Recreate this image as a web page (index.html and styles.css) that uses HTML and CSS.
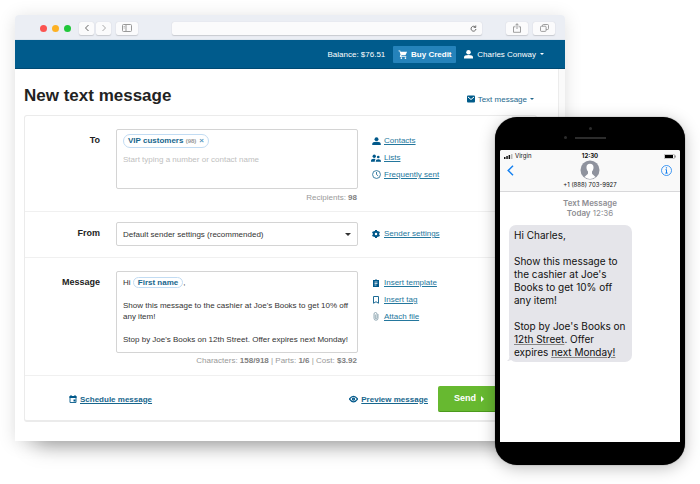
FILE: index.html
```html
<!DOCTYPE html>
<html lang="en">
<head>
    <meta charset="UTF-8">
    <meta name="viewport" content="width=device-width, initial-scale=1.0">
    <title>New text message</title>
    <link rel="stylesheet" href="styles.css">
</head>
<body>
    <div class="stage">
        <div class="browser">
            <div class="toolbar">
                <div class="dots">
                    <span class="dot red"></span>
                    <span class="dot yellow"></span>
                    <span class="dot green"></span>
                </div>
                <div class="history">
                    <button class="tool small" aria-label="Back"><svg width="8" height="8" viewBox="0 0 8 8" fill="none" stroke="#666"><path d="M5.5 1 2.5 4l3 3"/></svg></button>
                    <button class="tool small" aria-label="Forward"><svg width="8" height="8" viewBox="0 0 8 8" fill="none" stroke="#aaa"><path d="M2.5 1l3 3-3 3"/></svg></button>
                </div>
                <button class="tool" aria-label="Sidebar"><svg width="10" height="8" viewBox="0 0 10 8" fill="none" stroke="#999"><rect x=".5" y=".5" width="9" height="7" rx="1"/><path d="M4 1v6"/><path d="M1.5 2.5H3M1.5 4H3" stroke-width=".6"/></svg></button>
                <div class="address">
                    <input type="text" aria-label="Address">
                    <svg width="7" height="7" viewBox="0 0 8 8" fill="none" stroke="#555"><path d="M6.3 2.6A2.8 2.8 0 1 0 6.8 4.6"/><path d="M4.2 2.7h2.4V.5" stroke-width=".9"/></svg>
                </div>
                <div class="actions">
                    <button class="tool" aria-label="Share"><svg width="8" height="10" viewBox="0 0 8 10" fill="none" stroke="#888" stroke-width=".8"><path d="M2.5 3.8h-2v5.5h7V3.8h-2M4 6V.8M2.3 2.4 4 .7l1.7 1.7"/></svg></button>
                    <button class="tool" aria-label="Tabs"><svg width="9" height="8" viewBox="0 0 9 8" fill="none" stroke="#888" stroke-width=".8"><rect x=".5" y="2.2" width="5.6" height="5.2" rx="1"/><path d="M2.5 2.2V1.5q0-1 1-1h4q1 0 1 1v3q0 1-1 1H6.2"/></svg></button>
                </div>
            </div>

            <header class="app-bar">
                <span>Balance: $76.51</span>
                <button class="buy"><svg width="10" height="9" viewBox="0 0 24 22" fill="#fff"><path d="M1 1h4l1 3h16l-4 9H8.500l-1 2H20v2H5.500q-2-1-1-3l1.500-2.500L3.500 3H1z"/><circle cx="8" cy="20" r="2"/><circle cx="18" cy="20" r="2"/></svg>Buy Credit</button>
                <button class="user"><svg width="9" height="9" viewBox="0 0 16 16" fill="#fff"><circle cx="8" cy="4" r="4"/><path d="M0 15v-2q0-4 8-4t8 4v2z"/></svg>Charles Conway<i class="caret"></i></button>
            </header>

            <div class="page">
                <main class="content">
                    <div class="title-row">
                        <h1>New text message</h1>
                        <button class="type"><svg width="8" height="8" viewBox="0 0 16 16"><rect y="1" width="16" height="14" rx="2" fill="#005b8a"/><path d="M2 4l6 5 6-5" fill="none" stroke="#fff" stroke-width="2"/></svg>Text message<i class="caret"></i></button>
                    </div>

                    <form class="card">
                        <div class="row">
                            <label class="name" for="to">To</label>
                            <div class="field">
                                <div class="box recipients">
                                    <span class="chip">VIP customers <small>(98)</small><button type="button" class="remove" aria-label="Remove VIP customers">×</button></span>
                                    <input type="text" id="to" placeholder="Start typing a number or contact name">
                                </div>
                                <p class="hint">Recipients: <b>98</b></p>
                            </div>
                            <ul class="links">
                                <li><svg width="9" height="8" viewBox="0 0 16 15" fill="#00588a"><circle cx="8" cy="4" r="3.700"/><path d="M0 15v-2q0-4 8-4t8 4v2z"/></svg><a href="#">Contacts</a></li>
                                <li><svg width="10" height="8" viewBox="0 0 20 15" fill="#00588a"><circle cx="6.500" cy="4" r="3.300"/><path d="M0 15v-2q0-4 6-4l3 .5q-1.500 2-1.500 5.500z"/><circle cx="14.500" cy="5.500" r="2.700"/><path d="M9.500 15v-1.500q0-3.500 5.200-3.500t5.300 3.500V15z"/></svg><a href="#">Lists</a></li>
                                <li><svg width="9" height="9" viewBox="0 0 16 16" fill="none" stroke="#1f6c96" stroke-width="1.500"><circle cx="8" cy="8" r="7"/><path d="M8 3.500V8l3 2.500"/></svg><a href="#">Frequently sent</a></li>
                            </ul>
                        </div>

                        <div class="row from">
                            <label class="name" for="from">From</label>
                            <div class="field select">
                                <select class="box" id="from">
                                    <option>Default sender settings (recommended)</option>
                                </select>
                                <i class="caret"></i>
                            </div>
                            <ul class="links">
                                <li><svg width="8" height="8" viewBox="0 0 16 16"><circle cx="8" cy="8" r="4.500" fill="none" stroke="#00588a" stroke-width="4"/><path d="M8 0v3M8 13v3M1 4l2.700 1.500M12.300 10.500 15 12M1 12l2.700-1.500M12.300 5.500 15 4" stroke="#00588a" stroke-width="4"/></svg><a href="#">Sender settings</a></li>
                            </ul>
                        </div>

                        <div class="row message">
                            <span class="name" id="message-label">Message</span>
                            <div class="field">
                                <div class="box editor" contenteditable="true" role="textbox" aria-multiline="true" aria-labelledby="message-label" spellcheck="false">
                                    <p>Hi <span class="chip">First name</span>,</p>
                                    <p>Show this message to the cashier at Joe's Books to get 10% off any item!</p>
                                    <p>Stop by Joe's Books on 12th Street. Offer expires next Monday!</p>
                                </div>
                                <p class="hint">Characters: <b>158/918</b> | Parts: <b>1/6</b> | Cost: <b>$3.92</b></p>
                            </div>
                            <ul class="links">
                                <li><svg width="8" height="8" viewBox="0 0 16 16"><path d="M2 2h4q2-3 4 0h4v14H2z" fill="#00588a"/><path d="M5 6h6M5 9h6M5 12h4" stroke="#fff" stroke-width="1.500"/></svg><a href="#">Insert template</a></li>
                                <li><svg width="8" height="8" viewBox="0 0 16 16"><path d="M3 1h10v13.500l-5-3-5 3z" fill="none" stroke="#1f6c96" stroke-width="2"/></svg><a href="#">Insert tag</a></li>
                                <li><svg width="8" height="9" viewBox="0 0 16 18"><path d="M12 4v8.500a4 4 0 0 1-8 0V4a3 3 0 0 1 6 0v8a1.700 1.700 0 0 1-3.400 0V5" fill="none" stroke="#7793a0" stroke-width="1.500"/></svg><a href="#">Attach file</a></li>
                            </ul>
                        </div>

                        <div class="footer">
                            <div class="schedule"><svg width="8" height="8" viewBox="0 0 16 16"><path d="M2 3h12v12H2z" fill="none" stroke="#1f6c96" stroke-width="2"/><path d="M1 2h14v4H1zM3 0h2v3H3zM11 0h2v3h-2zM9 9h4v4H9z" fill="#00588a"/></svg><a href="#">Schedule message</a></div>
                            <div class="preview"><svg width="9" height="8" viewBox="0 0 18 14" fill="none" stroke="#00588a" stroke-width="2.500"><path d="M1 7q8-11 16 0-8 11-16 0z"/><circle cx="9" cy="7" r="2"/></svg><a href="#">Preview message</a></div>
                            <button type="button" class="send">Send<i></i></button>
                        </div>
                    </form>
                </main>
            </div>
        </div>

        <div class="phone">
            <div class="phone-top">
                <span class="sensor"></span>
                <div class="speaker-row"><span class="camera"></span><span class="speaker"></span></div>
            </div>
            <div class="screen">
                <div class="phone-head">
                    <div class="status">
                        <span class="carrier"><svg width="9" height="5" viewBox="0 0 9 5"><path d="M0 3h1.500v2H0zM2.300 2h1.500v3H2.300zM4.600 1h1.500v4H4.600z" fill="#111"/><path d="M7 0h1.500v5H7z" fill="#bbb"/></svg>Virgin</span>
                        <b>12:30</b>
                        <svg class="battery" width="12" height="5" viewBox="0 0 12 5"><rect x=".3" y=".3" width="10.200" height="4.400" rx="1" fill="none" stroke="#777" stroke-width=".5"/><path d="M1 1h8v3H1z" fill="#000"/><path d="M11.200 1.500v2" stroke="#777"/></svg>
                    </div>
                    <div class="contact">
                        <button aria-label="Back"><svg width="7" height="11" viewBox="0 0 7 11" fill="none" stroke="#1480f0" stroke-width="1.500"><path d="M6 .7 1.200 5.500 6 10.300"/></svg></button>
                        <svg width="20" height="20" viewBox="0 0 20 20"><circle cx="10" cy="10" r="9.500" fill="#8f939e"/><path d="M10 3.800c2.500 0 3.700 1.600 3.500 3.900-.1 1.600-.6 2.800-1.500 3.700v2c.4 1.300 2.200 1.800 3.500 3.500a9.200 9.200 0 0 1-11 0c1.300-1.700 3.100-2.200 3.500-3.500v-2c-.9-.9-1.400-2.100-1.500-3.700-.2-2.300 1-3.900 3.500-3.900z" fill="#fff"/></svg>
                        <button aria-label="Details"><svg width="11" height="11" viewBox="0 0 11 11" fill="none" stroke="#1480f0"><circle cx="5.500" cy="5.500" r="5" stroke-width=".8"/><path d="M5.500 4.600v3.500M4.500 4.700h1M4.300 8.100h2.400"/><circle cx="5.400" cy="2.900" r=".3"/></svg></button>
                    </div>
                    <p class="number">+1 (888) 703-9927</p>
                </div>
                <p class="stamp"><b>Text Message</b><br><b>Today</b> 12:36</p>
                <div class="bubble">
                    <p>Hi Charles,</p>
                    <p>Show this message to the cashier at Joe's Books to get 10% off any item!</p>
                    <p>Stop by Joe's Books on <u>12th Street</u>. Offer expires <u>next Monday!</u></p>
                    <svg class="tail" width="6" height="5" viewBox="0 0 6 5"><path d="M2 0v2L0 4q3 0 6-2z" fill="#e5e5ea"/></svg>
                </div>
            </div>
        </div>
    </div>
</body>
</html>
```
FILE: styles.css
```css
* {
    box-sizing: border-box;
}

body {
    margin: 0;
    padding: 15px 15px 42px;
    min-height: 100vh;
    background: #fff;
    color: #333;
    font-family: "Liberation Sans", Arial, sans-serif;
    font-size: 8px;
    line-height: 11px;
}

p, h1, ul {
    margin: 0;
    padding: 0;
}

button, input, select {
    font: inherit;
    color: inherit;
    border: 0;
    padding: 0;
    margin: 0;
    background: none;
}

svg {
    flex: none;
}

a {
    color: #24779d;
}

.stage {
    position: relative;
    padding-right: 120px;
}

/* Browser window */
.browser {
    position: relative;
    background: #fff;
    border-radius: 4px 4px 0 0;
    box-shadow: 0 2px 18px rgba(0, 0, 0, 0.13), 0 24px 20px -20px rgba(0, 0, 0, 0.35);
}

.toolbar {
    display: flex;
    align-items: center;
    height: 25px;
    padding: 2px 10px 0 25px;
    background: #ebeef4;
    border-radius: 4px 4px 0 0;
    border-bottom: 1px solid #dde4ec;
}

.dots {
    display: flex;
    gap: 5px;
    margin-right: 8px;
}

.dot {
    width: 7px;
    height: 7px;
    border-radius: 50%;
}

.red {
    background: #fb5350;
}

.yellow {
    background: #fdb124;
}

.green {
    background: #20c73a;
}

.history {
    display: flex;
    gap: 2px;
    margin-right: 5px;
}

.tool {
    display: flex;
    align-items: center;
    justify-content: center;
    width: 22px;
    height: 13px;
    background: #fbfbfc;
    border-radius: 2px;
    box-shadow: 0 1px 1px #c8cbd0, 0 0 1px #c8cbd0;
}

.tool.small {
    width: 15px;
}

.address {
    display: flex;
    align-items: center;
    flex: 1;
    height: 13px;
    margin: 0 24px 0 34px;
    padding-right: 5px;
    background: #fbfbfc;
    border-radius: 2px;
    box-shadow: 0 1px 1px #c8cbd0, 0 0 1px #c8cbd0;
}

.address input {
    flex: 1;
    min-width: 0;
    height: 11px;
}

.actions {
    display: flex;
    gap: 5px;
}

.app-bar {
    display: flex;
    align-items: center;
    justify-content: flex-end;
    gap: 8px;
    height: 29px;
    padding-right: 21px;
    background: #005b8c;
    border-bottom: 1px solid #004a73;
    color: #fff;
}

.buy {
    display: flex;
    align-items: center;
    justify-content: center;
    gap: 3px;
    width: 63px;
    height: 17px;
    background: #2583bb;
    border-radius: 1px;
    font-weight: bold;
}

.user, .type {
    display: flex;
    align-items: center;
    gap: 4px;
}

.caret {
    border: 2px solid transparent;
    border-top-color: currentColor;
    border-bottom: 0;
}

/* Compose page */
.page {
    padding-right: 6px;
    background: #fafafa;
}

.content {
    padding: 0 21px 19px 9px;
    background: #fff;
    border-right: 1px solid #ececec;
}

.title-row {
    display: flex;
    align-items: center;
    justify-content: space-between;
    height: 46px;
    padding: 7px 3px 0 0;
}

h1 {
    color: #222;
    font-size: 17px;
    line-height: 20px;
}

.type {
    gap: 3px;
    padding-top: 7px;
    color: #24698e;
}

.card {
    border: 1px solid #ebebeb;
    border-width: 1px 1px 2px;
    border-radius: 3px;
}

.row {
    display: grid;
    grid-template-columns: 75px minmax(0, 242px) 1fr;
    column-gap: 16px;
    padding: 13px 0 8px;
    border-bottom: 1px solid #f0f0f0;
}

.name {
    padding-top: 6px;
    color: #222;
    font-size: 9px;
    font-weight: bold;
    text-align: right;
}

.box {
    width: 100%;
    border: 1px solid #d4d4d4;
    border-radius: 2px;
    background: #fff;
}

.recipients {
    height: 60px;
    padding: 4px 6px;
}

.recipients input {
    display: block;
    width: 100%;
    height: 11px;
    margin-top: 6px;
}

.recipients input::placeholder {
    color: #c0c0c0;
}

.chip {
    display: inline-block;
    padding: 0 4px;
    border: 1px solid #c2dcf3;
    border-radius: 7px;
    color: #17668d;
    font-weight: bold;
}

.recipients .chip {
    display: table;
    height: 14px;
    line-height: 12px;
}

.chip small {
    color: #999;
    font-size: 6px;
}

.remove {
    margin-left: 3px;
    color: #5b97bd;
}

.hint {
    padding: 3px 1px 0 0;
    color: #999;
    text-align: right;
}

.hint b {
    color: #808080;
}

.links {
    display: flex;
    flex-direction: column;
    gap: 6px;
    padding-top: 6px;
    margin-left: -3px;
    list-style: none;
}

.links li {
    display: grid;
    grid-template-columns: 10px auto;
    justify-content: start;
    justify-items: center;
    align-items: center;
    column-gap: 3px;
}

.from {
    padding: 10px 0 11px;
}

.select {
    display: grid;
    align-items: center;
}

.select > * {
    grid-area: 1 / 1;
}

.select select {
    height: 24px;
    padding: 0 6px;
    appearance: none;
}

.select .caret {
    justify-self: end;
    margin-right: 7px;
    border-width: 3px 3px 0;
    pointer-events: none;
}

.message {
    padding: 13px 0 9px;
}

.message .hint {
    padding-top: 2px;
}

.editor {
    min-height: 82px;
    padding: 5px 6px;
    outline: 0;
}

.editor p + p {
    margin-top: 12px;
}

.editor .chip {
    line-height: 9px;
}

.footer {
    display: flex;
    align-items: center;
    padding: 10px 12px 8px 44px;
    font-weight: bold;
}

.footer a {
    color: #17668d;
}

.schedule, .preview {
    display: flex;
    align-items: center;
    gap: 3px;
}

.schedule {
    margin-right: auto;
}

.send {
    display: flex;
    align-items: center;
    gap: 5px;
    width: 86px;
    height: 26px;
    margin-left: 10px;
    padding-left: 16px;
    background: #67b930;
    border-bottom: 1px solid #4b9a1c;
    border-radius: 2px;
    color: #fff;
    font-size: 9px;
    font-weight: bold;
}

.send i {
    border: 3px solid transparent;
    border-left-color: #fff;
    border-right: 0;
}

/* Phone lies over the window */
.phone {
    position: absolute;
    top: 102px;
    right: 0;
    width: 190px;
    padding: 0 5px 23px;
    background: #000;
    border-radius: 22px;
    box-shadow: 0 3px 16px rgba(0, 0, 0, 0.25), 0 0 1px #555;
    color: #111;
    font-family: Inter, sans-serif;
}

.phone-top {
    display: flex;
    flex-direction: column;
    align-items: center;
    gap: 6px;
    height: 33px;
    padding-top: 10px;
}

.sensor, .camera {
    width: 3px;
    height: 3px;
    background: #2c2c2c;
    border-radius: 50%;
}

.speaker-row {
    display: flex;
    align-items: center;
    gap: 8px;
    margin-right: 11px;
}

.speaker {
    width: 31px;
    height: 2px;
    background: #2c2c2c;
}

.screen {
    min-height: 292px;
    background: #fff;
    border-radius: 2px 2px 0 0;
}

.phone-head {
    background: #f9f9f9;
    border-bottom: 1px solid #d8d8da;
    border-radius: 2px 2px 0 0;
    font-size: 6px;
    line-height: 8px;
    text-align: center;
}

.status {
    display: grid;
    grid-template-columns: 1fr auto 1fr;
    align-items: center;
    padding: 2px 4px 0;
}

.carrier {
    display: flex;
    align-items: center;
    gap: 2px;
}

.battery {
    justify-self: end;
}

.contact {
    display: flex;
    align-items: center;
    justify-content: space-between;
    padding: 0 8px 0 7px;
}

.contact button {
    display: flex;
    width: 11px;
}

.number {
    padding: 1px 0 2px;
}

.stamp {
    padding-top: 6px;
    color: #8e8e93;
    line-height: 10px;
    text-align: center;
}

.stamp b {
    font-weight: 600;
}

.bubble {
    position: relative;
    width: 123px;
    margin: 7px 0 0 9px;
    padding: 4px 5px 3px;
    background: #e5e5ea;
    border-radius: 7px;
    font-size: 10px;
    line-height: 13px;
}

.bubble p + p {
    margin-top: 13px;
}

.bubble u {
    text-decoration-color: #888;
    text-decoration-thickness: 1px;
}

.tail {
    position: absolute;
    left: -2px;
    bottom: 0;
}
```
